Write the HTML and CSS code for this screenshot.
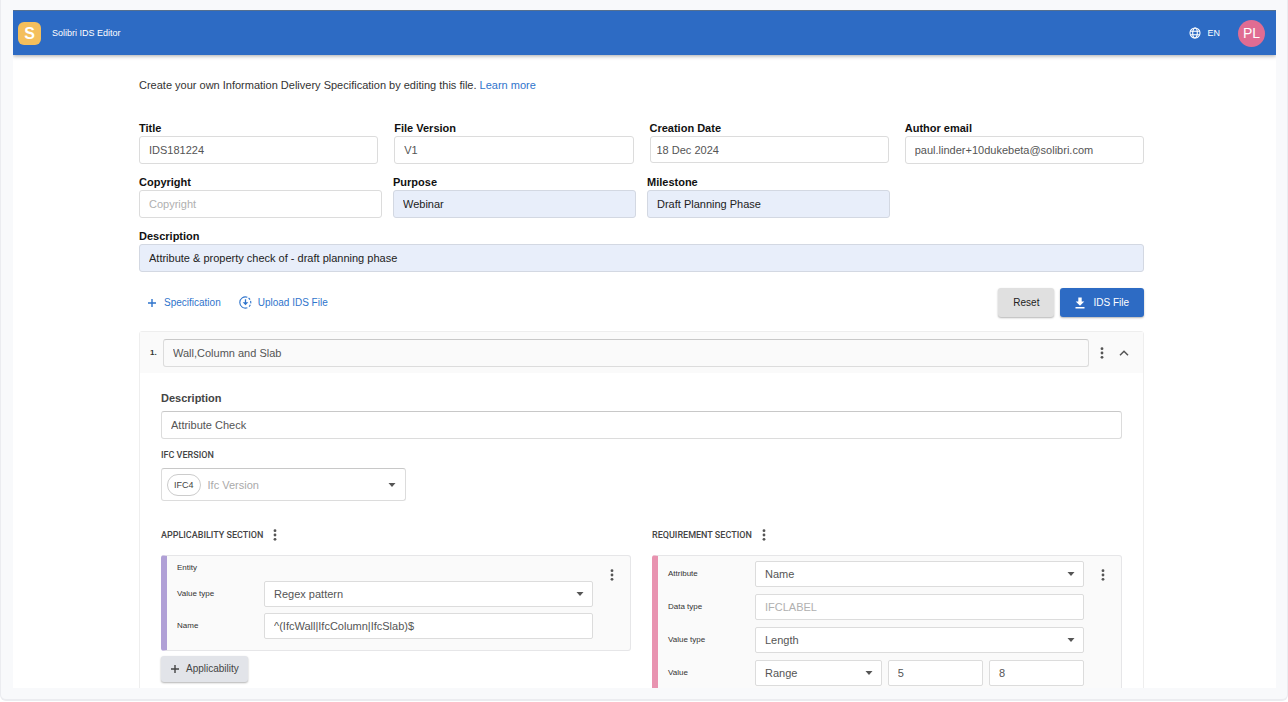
FILE: index.html
```html
<!DOCTYPE html>
<html lang="en">
<head>
<meta charset="utf-8">
<title>Solibri IDS Editor</title>
<link rel="stylesheet" href="styles.css">
</head>
<body>
<svg class="sprite" aria-hidden="true">
  <symbol id="dots" viewBox="0 0 4 12"><circle cx="2" cy="1.7" r="1.4"/><circle cx="2" cy="6" r="1.4"/><circle cx="2" cy="10.3" r="1.4"/></symbol>
  <symbol id="plus" viewBox="0 0 10 10"><path d="M5 1v8M1 5h8" fill="none" stroke="currentColor" stroke-width="1.4"/></symbol>
  <symbol id="arrow" viewBox="0 0 8 4"><path d="M0.5 0h7L4 4z"/></symbol>
</svg>
<div class="frame">
  <div class="app">
    <header class="topbar">
      <span class="logo">S</span>
      <span class="app-name">Solibri IDS Editor</span>
      <button class="lang" type="button">
        <svg class="globe" viewBox="0 0 12 12"><circle cx="6" cy="6" r="5"/><ellipse cx="6" cy="6" rx="2.3" ry="5"/><path d="M1.5 4.2h9M1.5 7.8h9"/></svg>
        EN
      </button>
      <button class="avatar" type="button">PL</button>
    </header>
    <main class="content">
      <p class="intro">Create your own Information Delivery Specification by editing this file. <a href="#">Learn more</a></p>
      <form class="meta">
        <div class="row row-wide">
          <div class="field"><label for="title">Title</label><input id="title" value="IDS181224"></div>
          <div class="field"><label for="version">File Version</label><input id="version" value="V1"></div>
          <div class="field"><label for="date">Creation Date</label><input id="date" class="date" value="18 Dec 2024"></div>
          <div class="field"><label for="email">Author email</label><input id="email" value="paul.linder+10dukebeta@solibri.com"></div>
        </div>
        <div class="row row-tight">
          <div class="field"><label for="copyright">Copyright</label><input id="copyright" placeholder="Copyright"></div>
          <div class="field"><label for="purpose">Purpose</label><input id="purpose" class="filled" value="Webinar"></div>
          <div class="field"><label for="milestone">Milestone</label><input id="milestone" class="filled" value="Draft Planning Phase"></div>
        </div>
        <div class="field"><label for="desc">Description</label><input id="desc" class="filled" value="Attribute &amp; property check of - draft planning phase"></div>
      </form>
      <div class="actions">
        <button class="link-btn" type="button"><svg class="i-plus"><use href="#plus"/></svg>Specification</button>
        <button class="link-btn" type="button"><svg class="i-upload" viewBox="0 0 14 14"><path d="M9 1.4A6 6 0 1 0 9 12.6" fill="none" stroke="currentColor" stroke-width="1.2"/><path d="M10.3 2.2A6 6 0 0 1 10.3 11.8" fill="none" stroke="currentColor" stroke-width="1.2" stroke-dasharray="2.4 1.4"/><path d="M6.3 3.6h1.4v3.2h2.3L7 10 4 6.8h2.3z" fill="currentColor"/></svg>Upload IDS File</button>
        <span class="spacer"></span>
        <button class="btn grey" type="button">Reset</button>
        <button class="btn blue" type="button"><svg class="i-down" viewBox="0 0 10 12"><path d="M3.3 0.5h3.4v4H9.3L5 8.7 0.7 4.5h2.6zM0.5 10h9v1.5h-9z" fill="currentColor"/></svg>IDS File</button>
      </div>
      <section class="spec">
        <div class="spec-head">
          <label for="spec-name">1.</label>
          <input id="spec-name" value="Wall,Column and Slab">
          <button class="icon-btn" type="button" aria-label="More"><svg class="i-dots"><use href="#dots"/></svg></button>
          <button class="icon-btn" type="button" aria-label="Collapse"><svg class="i-up" viewBox="0 0 10 6"><path d="M1 5.2l4-4 4 4" fill="none" stroke="currentColor" stroke-width="1.5"/></svg></button>
        </div>
        <div class="spec-body">
          <label class="sub-label" for="spec-desc">Description</label>
          <input id="spec-desc" class="line" value="Attribute Check">
          <label class="caps" for="ifc">IFC VERSION</label>
          <div class="picker ifc">
            <span class="chip">IFC4</span>
            <select id="ifc"><option>Ifc Version</option></select>
            <svg class="i-arrow"><use href="#arrow"/></svg>
          </div>
          <div class="columns">
            <section class="col">
              <h2 class="caps">APPLICABILITY SECTION <button class="icon-btn" type="button" aria-label="More"><svg class="i-dots"><use href="#dots"/></svg></button></h2>
              <div class="facet purple">
                <div class="facet-rows">
                  <div class="facet-title">Entity</div>
                  <div class="facet-row"><label for="a-type">Value type</label><div class="picker"><select id="a-type"><option>Regex pattern</option></select><svg class="i-arrow"><use href="#arrow"/></svg></div></div>
                  <div class="facet-row"><label for="a-name">Name</label><input id="a-name" value="^(IfcWall|IfcColumn|IfcSlab)$"></div>
                </div>
                <button class="icon-btn" type="button" aria-label="More"><svg class="i-dots"><use href="#dots"/></svg></button>
              </div>
              <button class="btn add" type="button"><svg class="i-plus"><use href="#plus"/></svg>Applicability</button>
            </section>
            <section class="col">
              <h2 class="caps">REQUIREMENT SECTION <button class="icon-btn" type="button" aria-label="More"><svg class="i-dots"><use href="#dots"/></svg></button></h2>
              <div class="facet pink">
                <div class="facet-rows">
                  <div class="facet-row"><label for="r-attr">Attribute</label><div class="picker"><select id="r-attr"><option>Name</option></select><svg class="i-arrow"><use href="#arrow"/></svg></div></div>
                  <div class="facet-row"><label for="r-data">Data type</label><input id="r-data" placeholder="IFCLABEL"></div>
                  <div class="facet-row"><label for="r-type">Value type</label><div class="picker"><select id="r-type"><option>Length</option></select><svg class="i-arrow"><use href="#arrow"/></svg></div></div>
                  <div class="facet-row"><label for="r-val">Value</label><div class="range"><div class="picker"><select id="r-val"><option>Range</option></select><svg class="i-arrow"><use href="#arrow"/></svg></div><input aria-label="From" value="5"><input aria-label="To" value="8"></div></div>
                </div>
                <button class="icon-btn" type="button" aria-label="More"><svg class="i-dots"><use href="#dots"/></svg></button>
              </div>
            </section>
          </div>
        </div>
      </section>
    </main>
  </div>
</div>
</body>
</html>
```

FILE: styles.css
```css
* { box-sizing: border-box; }
body {
  margin: 0;
  height: 100vh;
  padding-bottom: 1px;
  overflow: hidden;
  background: #fff;
  color: #333;
  font: 11px/16px "Liberation Sans", Arial, sans-serif;
}
button, input, select { font: inherit; color: inherit; margin: 0; }
button { border: 0; padding: 0; background: none; display: flex; align-items: center; justify-content: center; }
svg { fill: currentColor; flex: none; }
.sprite { display: none; }
.frame {
  height: 100%;
  padding: 10px 11px 11px 12px;
  background: #f8f9fb;
  border: 1px solid #ebecf0;
  border-top: 0;
  border-bottom-width: 2px;
  border-radius: 0 0 6px 6px;
}
.app { height: 100%; overflow: hidden; background: #fff; }

.topbar {
  display: flex;
  align-items: center;
  height: 45px;
  padding: 0 11px 0 5px;
  background: #2d6bc4;
  border-top: 1px solid #56708f;
  color: #fff;
  box-shadow: 0 1px 4px rgba(0, 0, 0, .35);
}
.logo {
  width: 23px;
  height: 23px;
  border-radius: 6px;
  background: #f4bf5c;
  font: bold 16px/23px "Liberation Sans", Arial, sans-serif;
  text-align: center;
}
.app-name { margin-left: 11px; font-size: 9px; }
.lang { margin-left: auto; gap: 6px; font-size: 9px; }
.globe { width: 12px; height: 12px; fill: none; stroke: currentColor; stroke-width: 1.1; }
.avatar {
  width: 27px;
  height: 27px;
  margin-left: 18px;
  border-radius: 50%;
  background: #e06c92;
  font-size: 14px;
}

.content { padding: 22px 132px 0 126px; }
.intro { margin: 0 0 26px; color: #333; }
a { color: #2f74cc; text-decoration: none; }

.meta { display: grid; gap: 9px; }
.row { display: grid; grid-template-columns: repeat(4, 1fr); }
.row-wide { column-gap: 16px; }
.row-tight { column-gap: 11px; }
.field label { display: block; height: 17px; line-height: 18px; font-weight: bold; color: #111; }
input, .picker {
  display: block;
  width: 100%;
  min-width: 0;
  height: 28px;
  padding: 0 9px;
  border: 1px solid #dcdcdc;
  border-radius: 3px;
  background: #fff;
  color: #555;
}
input::placeholder { color: #b0b0b0; opacity: 1; }
.date { height: 27px; padding: 0 6px; }
.filled { background: #e8eefa; border-color: #d3d8e2; color: #222; }

.actions { display: flex; align-items: center; margin: 16px 0 14px; }
.link-btn { gap: 7px; margin-left: 8px; font-size: 10px; color: #2f74cc; }
.link-btn + .link-btn { margin-left: 18px; gap: 6px; }
.i-plus { width: 10px; height: 10px; }
.i-upload { width: 13px; height: 13px; }
.i-down { width: 10px; height: 12px; }
.spacer { flex: 1; }
.btn { height: 29px; border-radius: 3px; box-shadow: 0 1px 2px rgba(0, 0, 0, .3); font-size: 10px; }
.grey { padding: 0 15px; background: #e0e0e0; color: #222; }
.blue { margin-left: 6px; padding: 0 15px; gap: 8px; background: #2d6bc4; color: #fff; }

.spec { border: 1px solid #eee; border-radius: 3px; }
.spec-head { display: flex; align-items: center; height: 41px; padding: 0 14px 0 10px; background: #fafafa; }
.spec-head label { width: 13px; font-size: 8px; font-weight: bold; }
.spec-head input { flex: 1; background: transparent; border-top-color: #c8c8c8; }
.icon-btn { color: #555; }
.spec-head .icon-btn { margin-left: 11px; }
.spec-head .icon-btn + .icon-btn { margin-left: 15px; }
.i-dots { width: 4px; height: 12px; }
.i-up { width: 10px; height: 6px; }
.i-arrow { width: 8px; height: 4px; color: #555; pointer-events: none; }

.spec-body { padding: 17px 21px 0; }
.sub-label { display: block; margin-bottom: 5px; font-weight: bold; color: #444; }
.line { border-top-color: #c8c8c8; }
.caps { display: flex; align-items: center; margin: 0; font: 500 9px/16px Roboto, sans-serif; color: #444; }
label.caps { margin: 8px 0 5px; }
.picker { display: flex; align-items: center; padding: 0 8px 0 0; }
select {
  flex: 1;
  min-width: 0;
  height: 100%;
  padding: 0 9px;
  border: 0;
  background: transparent;
  appearance: none;
}
.ifc { width: 245px; height: 33px; padding: 0 9px 0 5px; border-top-color: #c8c8c8; }
.ifc select { padding: 0 7px; color: #aaa; }
.chip { padding: 0 6px; border: 1px solid #ccc; border-radius: 11px; font-size: 9px; line-height: 20px; color: #444; }

.columns { display: grid; grid-template-columns: 1fr 1fr; gap: 21px; margin-top: 26px; }
.caps .icon-btn { margin-left: 10px; }
.facet {
  display: flex;
  align-items: flex-start;
  margin-top: 12px;
  padding: 5px 16px 11px 10px;
  border: 1px solid #e6e6e8;
  border-left: 6px solid;
  border-radius: 3px;
  background: #fafafa;
}
.purple { border-left-color: #b0a0d6; }
.pink { border-left-color: #e893b0; }
.facet-rows { flex: 1; display: grid; gap: 6px; min-width: 0; }
.pink .facet-rows { gap: 7px; }
.facet-title { height: 14px; line-height: 14px; font-size: 8px; }
.facet-row { display: grid; grid-template-columns: 87px 1fr; align-items: center; font-size: 8px; }
.facet-row input, .facet-row .picker { height: 26px; font-size: 11px; border-radius: 2px; }
.range { display: grid; grid-template-columns: 4fr 3fr 3fr; gap: 6px; }
.facet > .icon-btn { margin: 8px 0 0 17px; }
.add { height: 26px; margin-top: 5px; padding: 0 9px; gap: 6px; background: #e2e4e9; color: #444; }
```
